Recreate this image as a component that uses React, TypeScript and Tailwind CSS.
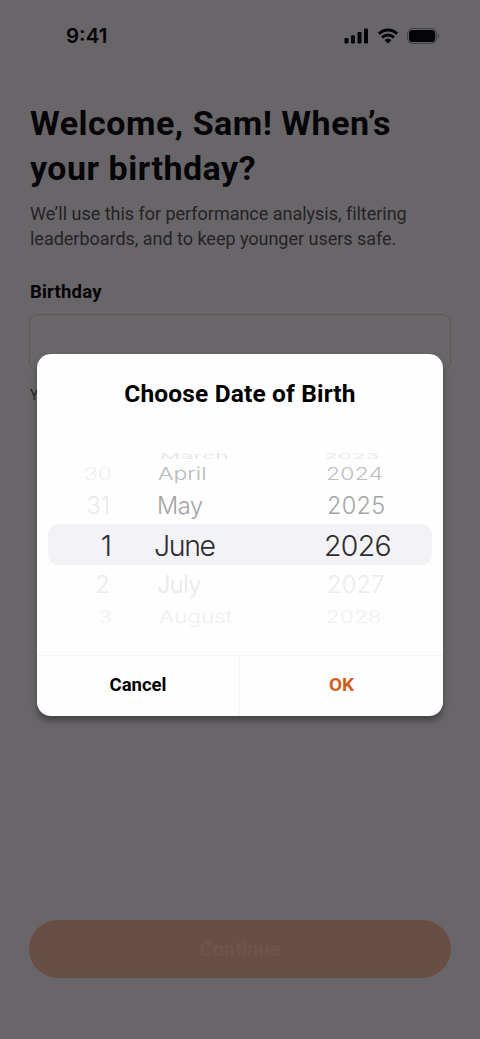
type PickerRow = {
  day: string;
  month: string;
  year: string;
  row: string;
  dayClass: string;
  monthClass: string;
  yearClass: string;
};

const rows: PickerRow[] = [
  {
    day: "",
    month: "March",
    year: "2023",
    row: "h-[12px] text-[22.5px]",
    dayClass: "text-[#f5f5f5]",
    monthClass: "pl-[13px] text-[#e4e4e4] tracking-[0.6px] scale-y-[0.34]",
    yearClass: "pl-[13px] text-[#e6e6e6] scale-y-[0.34]",
  },
  {
    day: "30",
    month: "April",
    year: "2024",
    row: "h-[24px] text-[23px]",
    dayClass: "pr-[0px] text-[#efefef] scale-y-[0.74]",
    monthClass: "pl-[11px] text-[#b8b8b8] scale-y-[0.74]",
    yearClass: "pl-[15px] text-[#bebebe] scale-y-[0.74] tracking-[0.2px]",
  },
  {
    day: "31",
    month: "May",
    year: "2025",
    row: "h-[40px] text-[23.5px]",
    dayClass: "pr-[2px] text-[#e9e9e9]",
    monthClass: "pl-[10px] text-[#a2a2a2] tracking-[-0.3px]",
    yearClass: "pl-[16px] text-[#a5a5a5] tracking-[0.3px]",
  },
  {
    day: "1",
    month: "June",
    year: "2026",
    row: "h-[40px] text-[28.5px]",
    dayClass: "pr-[0px] text-[#2d2c2f]",
    monthClass: "pl-[7px] text-[#2d2c2f] tracking-[-1.4px]",
    yearClass: "pl-[13px] text-[#2d2c2f] tracking-[-0.7px]",
  },
  {
    day: "2",
    month: "July",
    year: "2027",
    row: "h-[38px] text-[23.5px]",
    dayClass: "pr-[2px] text-[#ebebeb]",
    monthClass: "pl-[10px] text-[#e8e8e8] tracking-[-0.5px]",
    yearClass: "pl-[16px] text-[#ebebeb] tracking-[0.3px]",
  },
  {
    day: "3",
    month: "August",
    year: "2028",
    row: "h-[27px] text-[22.5px]",
    dayClass: "pr-[0px] text-[#f1f1f1] scale-y-[0.74]",
    monthClass: "pl-[12px] text-[#efefef] scale-y-[0.74]",
    yearClass: "pl-[15px] text-[#f0f0f0] scale-y-[0.74] tracking-[0.1px]",
  },
];

function StatusBar() {
  return (
    <div className="flex h-[72px] items-center justify-between pl-[66px] pr-[40px]">
      <span className="font-['Inter',sans-serif] text-[20.5px] font-semibold leading-6 tracking-[0px]">
        9:41
      </span>
      <div className="flex items-center gap-[9px]">
        <svg width="25" height="16" viewBox="0 0 25 16" fill="currentColor">
          <rect x="0.5" y="10" width="4" height="5.5" rx="1.2" />
          <rect x="7" y="7.2" width="4" height="8.3" rx="1.2" />
          <rect x="13.5" y="4" width="4" height="11.5" rx="1.2" />
          <rect x="20" y="0.5" width="4" height="15" rx="1.2" />
        </svg>
        <svg width="20" height="16" viewBox="0 0 20 16" fill="none" stroke="currentColor" strokeWidth="3">
          <path d="M0.9 5.8C6 0.7 14 0.7 19.1 5.8" />
          <path d="M4 9.5C7.4 6.3 12.6 6.3 16 9.5" />
          <path d="M6.6 12.2a4.8 4.8 0 0 1 6.8 0L10 15.6z" fill="currentColor" stroke="none" />
        </svg>
        <svg width="33" height="16" viewBox="0 0 33 16">
          <rect x="0.6" y="0.6" width="29" height="14.8" rx="4.8" fill="none" stroke="#3e3c3e" />
          <rect x="2" y="2" width="26.2" height="12" rx="3.6" fill="currentColor" />
          <path d="M31 5.6c1.6.7 1.6 4.1 0 4.8z" fill="#3e3c3e" />
        </svg>
      </div>
    </div>
  );
}

function DatePicker() {
  return (
    <div className="relative mx-[11px] mt-[42px] h-[199px]">
      <div className="absolute inset-x-0 top-[74px] h-[41px] rounded-[10px] bg-[#f3f2f6]" />
      <div className="relative flex flex-col font-['Inter',sans-serif] font-[350]">
        {rows.map((r) => (
          <div key={r.month} className={`flex items-center whitespace-nowrap leading-none ${r.row}`}>
            <div className={`w-[64px] text-right ${r.dayClass}`}>{r.day}</div>
            <div className="w-[35px]" />
            <div className={`w-[164px] ${r.monthClass}`}>{r.month}</div>
            <div className={`flex-1 ${r.yearClass}`}>{r.year}</div>
          </div>
        ))}
      </div>
    </div>
  );
}

function DateDialog() {
  return (
    <div
      role="dialog"
      className="absolute left-[37px] top-[354px] flex h-[361.5px] w-[406px] flex-col overflow-hidden rounded-[14px] bg-[#fefefe] text-black"
    >
      <h2 className="pt-[26px] text-center text-[24.5px] font-bold leading-[28px] tracking-[0.15px]">
        Choose Date of Birth
      </h2>
      <DatePicker />
      <div className="mt-auto flex h-[61px] border-t border-[#f4f4f4] text-[18.5px] font-bold">
        <button className="w-[203px] border-r border-[#f4f4f4]">Cancel</button>
        <button className="flex-1 text-[19px] text-[#d25e1e]">OK</button>
      </div>
    </div>
  );
}

export default function App() {
  return (
    <div className="relative h-[1039px] w-[480px] overflow-hidden bg-[#696669] font-['Roboto',sans-serif] text-[#050406]">
      <StatusBar />
      <main className="flex h-[967px] flex-col pl-[30px] pr-[30px]">
        <h1 className="mt-[29px] whitespace-nowrap text-[34px] font-bold leading-[45px] tracking-[0.5px]">
          <span className="block">Welcome, Sam! When’s</span>
          <span className="block">your birthday?</span>
        </h1>
        <p className="mt-[10px] whitespace-nowrap text-[18px] leading-[25px] tracking-[-0.02px] text-[#242225]">
          <span className="block">We’ll use this for performance analysis, filtering</span>
          <span className="block">leaderboards, and to keep younger users safe.</span>
        </p>
        <label className="mt-[29px] text-[18.5px] font-bold leading-[24px] tracking-[0.2px]">Birthday</label>
        <div className="-ml-px mt-[10px] h-[57px] w-[422px] shrink-0 rounded-[9px] border border-[#5c595b]" />
        <div className="mt-[15px] text-[14px] leading-[18px] text-[#242225]">Y</div>
        <button className="-ml-px mb-[61px] mt-auto h-[58px] w-[422px] shrink-0 rounded-full bg-[#694e43] text-[20px] font-bold text-[#6c554b]">
          Continue
        </button>
      </main>
      <div className="absolute left-[37px] top-[354px] h-[361.5px] w-[406px] rounded-[14px] shadow-[0_5px_6px_0px_rgba(45,45,45,0.6)]" />
      <DateDialog />
    </div>
  );
}
